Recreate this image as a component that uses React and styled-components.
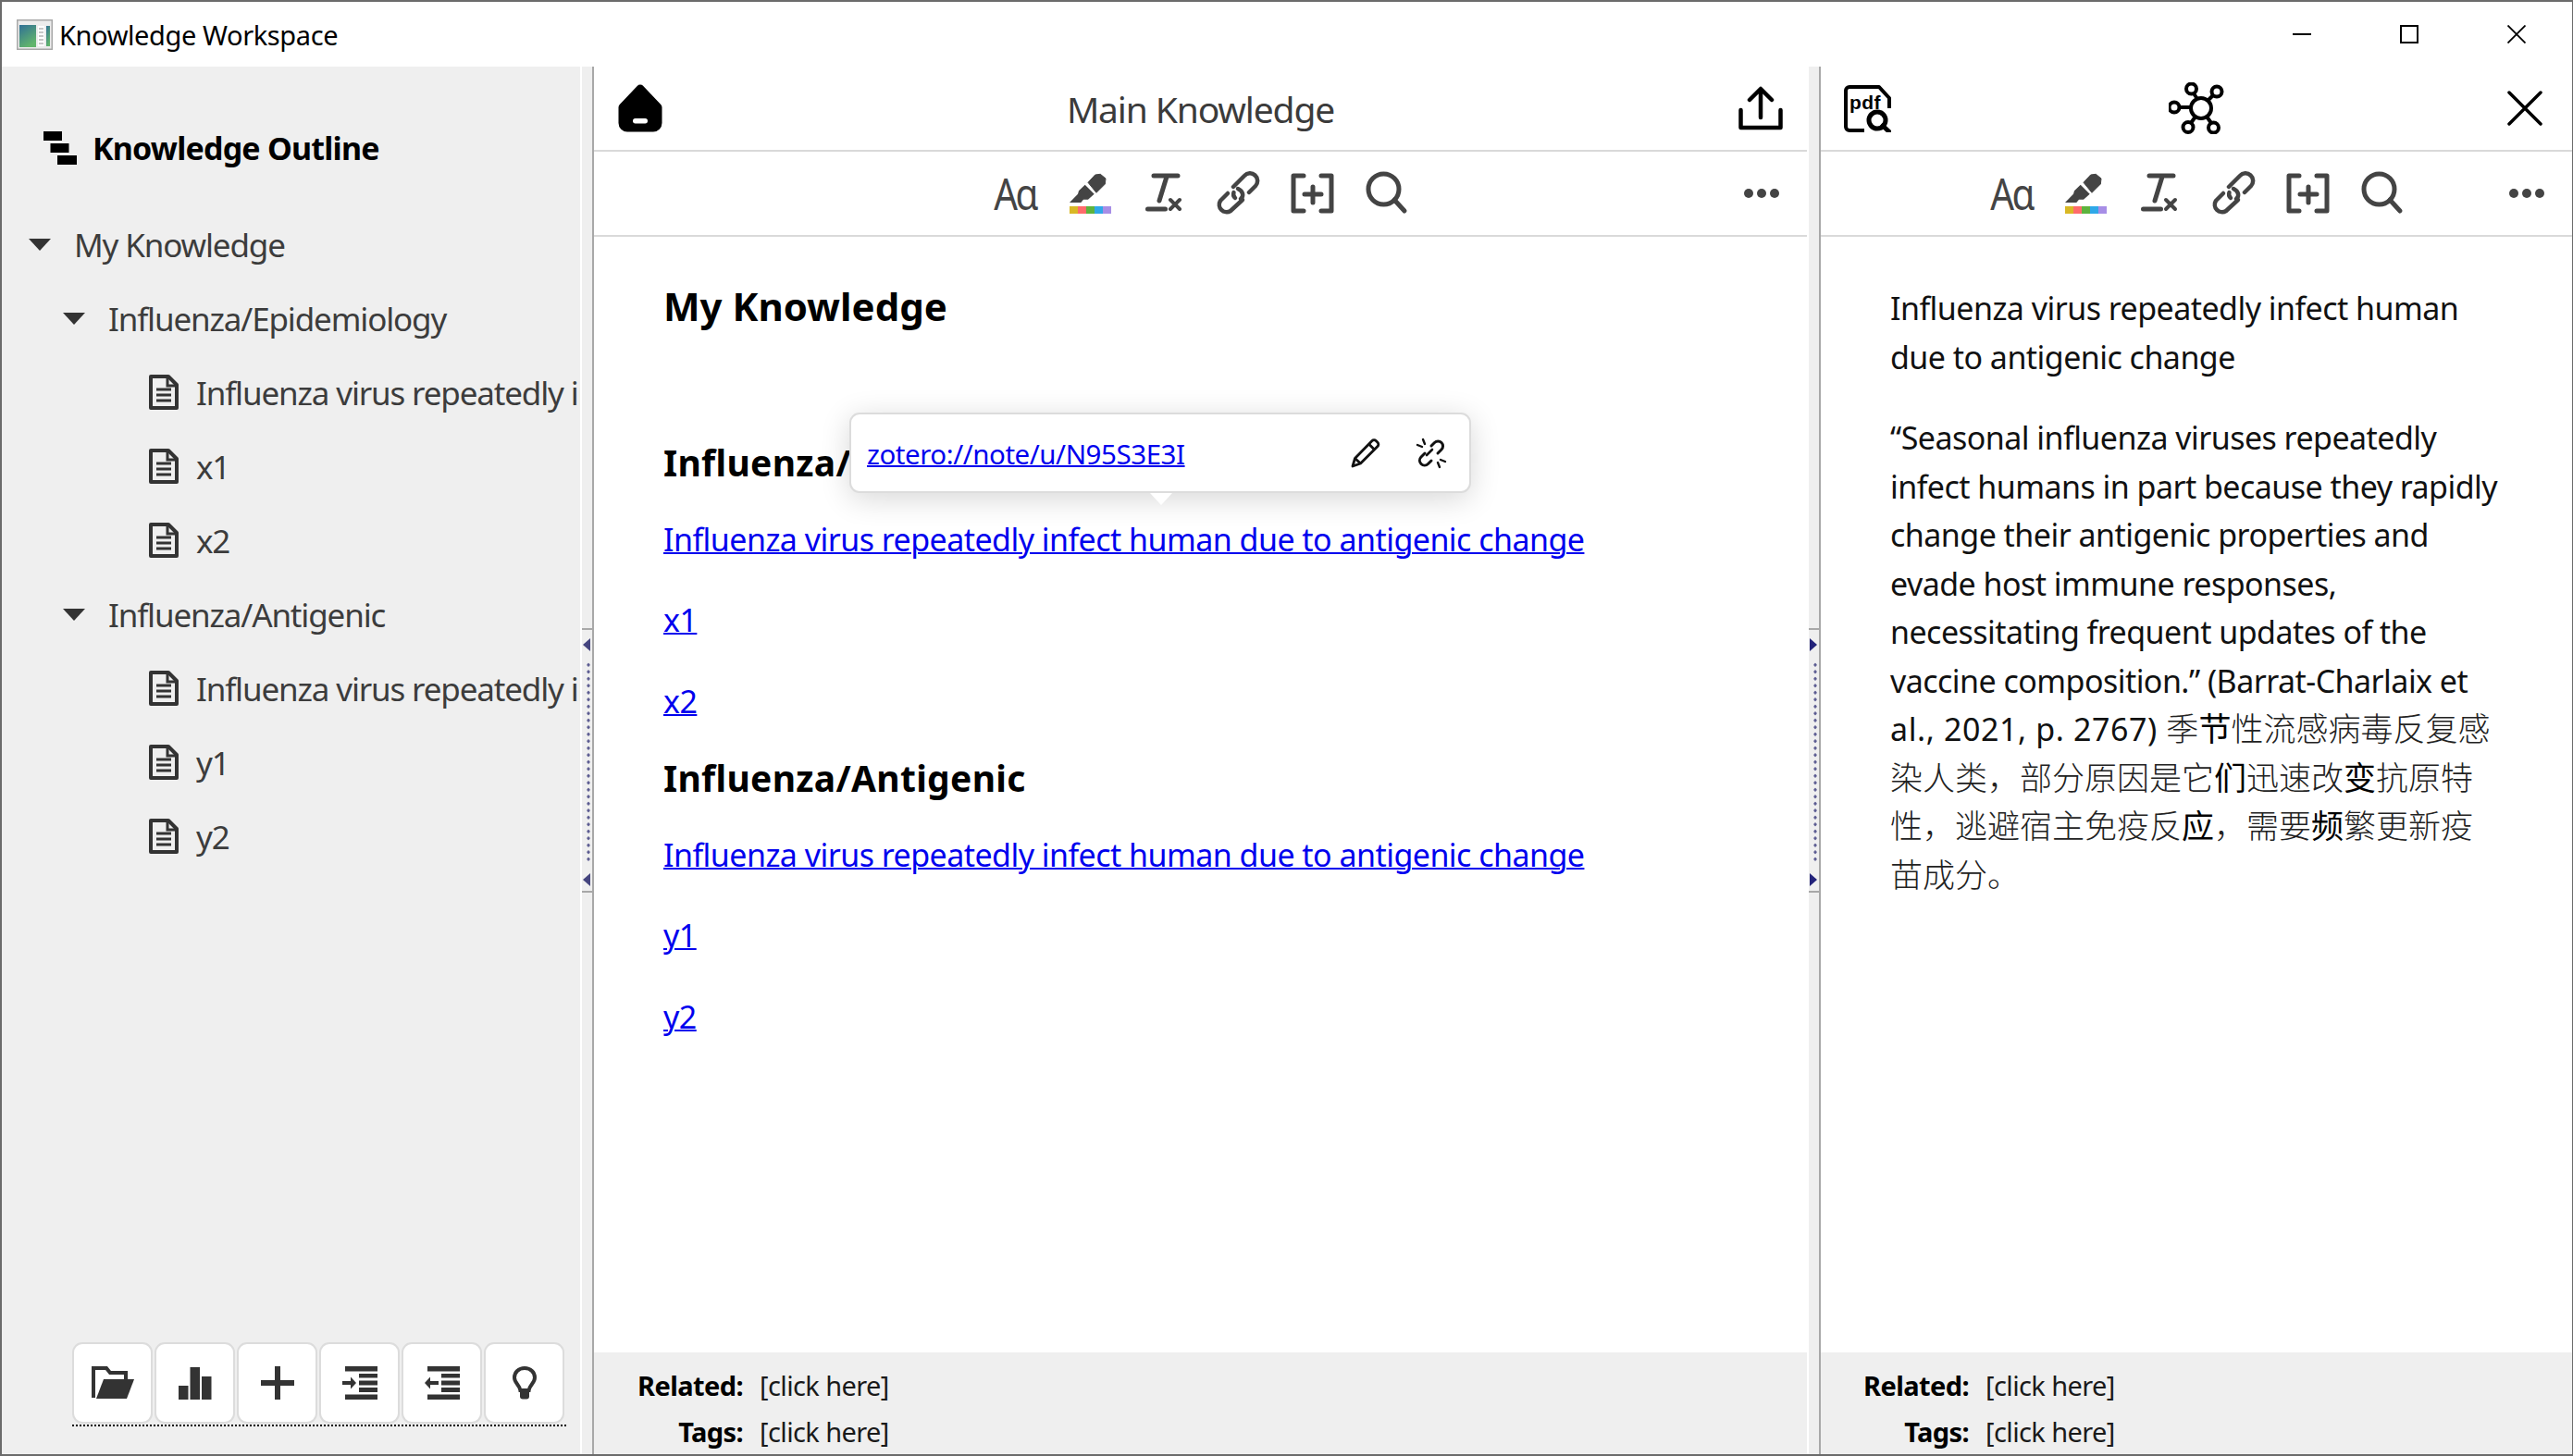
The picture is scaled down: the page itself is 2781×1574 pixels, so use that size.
import React from "react";
import styled, { createGlobalStyle } from "styled-components";

const GlobalStyle = createGlobalStyle`
  html, body {
    margin: 0;
    padding: 0;
    background: #fff;
  }
  body {
    font-family: "Noto Sans", "Noto Sans CJK SC", sans-serif;
    color: #111;
  }
  * {
    box-sizing: border-box;
  }
`;

const Window = styled.div`
  display: flex;
  flex-direction: column;
  width: 2781px;
  height: 1574px;
  overflow: hidden;
  border: 2px solid #6b6b6b;
  border-right-width: 1px;
`;

const TitleBar = styled.div`
  display: flex;
  align-items: center;
  flex: 0 0 70px;
  padding: 0 2px 0 16px;
  background: #fff;
`;

const WindowTitle = styled.div`
  margin-left: 7px;
  font-size: 29px;
  letter-spacing: -0.4px;
  color: #000;
`;

const WindowControls = styled.div`
  display: flex;
  margin-left: auto;
`;

const WindowControl = styled.div`
  display: flex;
  align-items: center;
  justify-content: center;
  width: 116px;
  height: 70px;
`;

const Main = styled.div`
  display: grid;
  grid-template-columns: 625px 15px 1311px 15px 1fr;
  flex: 1;
  min-height: 0;
`;

const Outline = styled.aside`
  display: flex;
  flex-direction: column;
  min-width: 0;
  overflow: hidden;
  background: #efefef;
`;

const OutlineHeader = styled.div`
  display: flex;
  align-items: center;
  gap: 17px;
  height: 72px;
  margin-top: 52px;
  padding-left: 45px;
`;

const OutlineTitle = styled.div`
  font-size: 34px;
  font-weight: 700;
  letter-spacing: -0.8px;
  color: #000;
`;

const Tree = styled.div`
  margin-top: 28px;
`;

const TreeRow = styled.div`
  display: flex;
  align-items: center;
  height: 80px;
  padding-left: ${({ $level }) => [29, 66, 158][$level]}px;
  white-space: nowrap;
  font-size: 35px;
  letter-spacing: -1.15px;
  color: #3c3c3c;
`;

const Caret = styled.span`
  flex: none;
  width: 0;
  height: 0;
  margin-right: 25px;
  border-left: 12.5px solid transparent;
  border-right: 12.5px solid transparent;
  border-top: 13px solid #333;
`;

const DocGlyph = styled.svg`
  flex: none;
  margin-right: 18px;
`;

const BottomBar = styled.div`
  display: flex;
  gap: 2px;
  margin: auto 0 30px 76px;
  width: 534px;
  border-bottom: 2px dotted #000;
  padding-bottom: 1px;
`;

const BarButton = styled.div`
  display: flex;
  align-items: center;
  justify-content: center;
  width: 87px;
  height: 88px;
  background: #fff;
  border: 2px solid #dcdcdc;
  border-radius: 11px;
  color: #333;
`;

const Splitter = styled.div`
  display: flex;
  align-items: center;
  background: #efefef;
  border-left: 2px solid #fff;
  border-right: 2px solid #a8a8a8;
`;

const SplitHandle = styled.div`
  display: flex;
  flex-direction: column;
  align-items: center;
  justify-content: space-between;
  width: 100%;
  height: 286px;
  padding: 9px 0 5px;
  border-top: 2px solid #a8a8a8;
  border-bottom: 2px solid #a8a8a8;
`;

const HandleArrow = styled.span`
  width: 0;
  height: 0;
  margin-right: 1px;
  border-top: 7px solid transparent;
  border-bottom: 7px solid transparent;
  ${({ $dir }) =>
    $dir === "left"
      ? "border-right: 8px solid #45457f;"
      : "border-left: 8px solid #23237a;"}
`;

const HandleDots = styled.span`
  width: 4px;
  height: 218px;
  margin-left: 3px;
  background-image: radial-gradient(circle, #5a5a90 1.4px, transparent 1.8px);
  background-size: 4px 7.5px;
`;

const Pane = styled.section`
  display: flex;
  flex-direction: column;
  min-width: 0;
  background: #fff;
`;

const PaneHeader = styled.header`
  display: grid;
  grid-template-columns: 1fr auto 1fr;
  align-items: center;
  flex: 0 0 92px;
  padding: 0 ${({ $right }) => $right}px 0 ${({ $left }) => $left}px;
  border-bottom: 2px solid #d9d9d9;
`;

const HeaderEnd = styled.div`
  display: flex;
  justify-content: ${({ $end }) => ($end ? "flex-end" : "flex-start")};
`;

const PaneTitle = styled.div`
  font-size: 39px;
  letter-spacing: -1.15px;
  color: #3b3b3b;
`;

const GraphSlot = styled.div`
  display: flex;
  margin-left: 7px;
`;

const Toolbar = styled.div`
  display: grid;
  grid-template-columns: 1fr auto 1fr;
  align-items: center;
  flex: 0 0 92px;
  padding: 0 30px;
  border-bottom: 2px solid #d9d9d9;
`;

const ToolGroup = styled.div`
  display: flex;
  grid-column: 2;
`;

const ToolButton = styled.div`
  display: flex;
  align-items: center;
  justify-content: center;
  width: 80px;
  height: 48px;
  color: #444;
`;

const AaGlyph = styled.span`
  font-family: "Noto Sans", sans-serif;
  font-size: 48px;
  line-height: 48px;
  letter-spacing: -3px;
  color: #444;
  transform: scaleX(0.84);
`;

const MoreDots = styled.div`
  display: flex;
  justify-content: flex-end;
  gap: 4px;
`;

const MoreDot = styled.span`
  width: 10px;
  height: 10px;
  border-radius: 50%;
  background: #444;
`;

const NoteBody = styled.div`
  position: relative;
  flex: 1;
  min-height: 0;
  padding: ${({ $top }) => $top}px 20px 0 ${({ $left }) => $left}px;
  font-size: 34px;
  line-height: 52.5px;
  letter-spacing: -0.54px;
  white-space: nowrap;
`;

const NoteHeading = styled.h1`
  margin: 0 0 113.5px;
  font-size: 42px;
  line-height: 60px;
  font-weight: 700;
  letter-spacing: 0;
  color: #000;
`;

const NoteSubheading = styled.h2`
  margin: 0 0 30px;
  font-size: 39px;
  line-height: 52.5px;
  font-weight: 700;
  letter-spacing: 0.3px;
  color: #000;
`;

const LinkList = styled.div`
  display: flex;
  flex-direction: column;
  gap: 35px;
  margin-bottom: 31px;
`;

const NoteLink = styled.a`
  width: fit-content;
  color: #0000ee;
  text-decoration: underline;
  text-decoration-thickness: 2px;
`;

const NoteParagraph = styled.p`
  margin: 0 0 35px;
`;

const Citation = styled.span`
  letter-spacing: 0.6px;
`;

const Cjk = styled.span`
  font-family: "Noto Sans CJK SC", sans-serif;
  font-size: 35px;
  line-height: 1;
  letter-spacing: 0;
  font-weight: ${({ $dark }) => ($dark ? 400 : 300)};
  color: ${({ $dark }) => ($dark ? "#000" : "#222")};
`;

const LinkPopup = styled.div`
  position: absolute;
  left: 276px;
  top: 190px;
  display: flex;
  align-items: center;
  width: 672px;
  height: 87px;
  padding: 0 24px 0 17px;
  background: #fff;
  border: 2px solid #dcdcdc;
  border-radius: 11px;
  box-shadow: 0 6px 32px rgba(0, 0, 0, 0.16);

  &::after {
    content: "";
    position: absolute;
    left: 323px;
    bottom: -15px;
    border-left: 12px solid transparent;
    border-right: 12px solid transparent;
    border-top: 13px solid #fff;
  }
`;

const PopupLink = styled.a`
  margin: 3px auto 0 0;
  font-size: 29.5px;
  line-height: 40px;
  letter-spacing: -0.45px;
  color: #0000ee;
  text-decoration: underline;
  text-decoration-thickness: 2px;
`;

const PopupIcons = styled.div`
  display: flex;
  align-items: center;
  gap: 38px;
  color: #111;
`;

const NoteFooter = styled.footer`
  display: grid;
  grid-template-columns: ${({ $label }) => $label}px 1fr;
  grid-auto-rows: 50px;
  column-gap: 18px;
  align-items: center;
  flex: 0 0 110px;
  padding-top: 10px;
  background: #efefef;
  font-size: 29px;
  letter-spacing: -0.6px;
`;

const FooterLabel = styled.div`
  text-align: right;
  font-weight: 700;
  color: #000;
`;

const FooterValue = styled.div`
  color: #1a1a1a;
`;

const AppIcon = () => (
  <svg width="39" height="33" viewBox="0 0 39 33">
    <defs>
      <linearGradient id="appPanel" x1="0" y1="0" x2="0.5" y2="1">
        <stop offset="0" stopColor="#2f6f96" />
        <stop offset="1" stopColor="#62b56c" />
      </linearGradient>
    </defs>
    <rect x="0.75" y="0.75" width="37.5" height="31.5" fill="#ececec" stroke="#a8a8a8" strokeWidth="1.5" />
    <rect x="3" y="6" width="18" height="24" fill="url(#appPanel)" />
    <rect x="23" y="7" width="7" height="22" fill="#fff" />
    <path d="M24 10h5M24 14h5M24 18h5M24 22h5M24 26h5" stroke="#b5b5b5" strokeWidth="1.5" />
    <rect x="32" y="7" width="4" height="22" fill="url(#appPanel)" />
  </svg>
);

const OutlineIcon = () => (
  <svg width="36" height="36" viewBox="0 0 36 36" fill="#000">
    <rect x="0" y="0" width="20" height="10" />
    <rect x="7.5" y="13" width="20" height="10" />
    <rect x="15" y="26" width="21" height="10" />
  </svg>
);

const DocIcon = () => (
  <DocGlyph width="34" height="38" viewBox="0 0 34 38" fill="none" stroke="#333" strokeWidth="4">
    <path d="M3 2h19l9 9v25H3z" strokeLinejoin="round" />
    <path d="M21 2v10h10M9 16h16M9 22h16M9 28h16" strokeWidth="3" />
  </DocGlyph>
);

const FolderIcon = () => (
  <svg width="46" height="36" viewBox="0 0 46 36" fill="#333">
    <path d="M2 34V2h14l4 5h17v9" fill="none" stroke="#333" strokeWidth="4" />
    <path d="M13 14h33l-8 21H5z" />
  </svg>
);

const ChartIcon = () => (
  <svg width="36" height="36" viewBox="0 0 36 36" fill="#333">
    <rect x="0" y="21" width="10.5" height="15" />
    <rect x="12.5" y="1" width="10.5" height="35" />
    <rect x="25" y="11" width="10.5" height="25" />
  </svg>
);

const PlusIcon = () => (
  <svg width="36" height="36" viewBox="0 0 36 36" fill="#333">
    <rect x="0" y="15" width="36" height="6" />
    <rect x="15" y="0" width="6" height="36" />
  </svg>
);

const IndentIcon = ({ out }) => (
  <svg width="38" height="36" viewBox="0 0 38 36" fill="#333">
    <rect x="3" y="0" width="35" height="5.5" />
    <rect x="18" y="8" width="20" height="4.5" />
    <rect x="18" y="15.5" width="20" height="5" />
    <rect x="18" y="23" width="20" height="5" />
    <rect x="3" y="30.5" width="35" height="5.5" />
    {out ? (
      <path d="M0 18l6-6.5v4.5h9v4H6v4.5z" />
    ) : (
      <path d="M15 18l-6-6.5v4.5H0v4h9v4.5z" />
    )}
  </svg>
);

const BulbIcon = () => (
  <svg width="26" height="36" viewBox="0 0 26 36">
    <path
      d="M13 2C6.5 2 2 6.6 2 12.2c0 6 5.7 8 6.4 13.8h9.2C18.3 20.2 24 18.2 24 12.2 24 6.6 19.5 2 13 2z"
      fill="none"
      stroke="#333"
      strokeWidth="4"
    />
    <path d="M8 28h10v4.5a3 3 0 0 1-3 3h-4a3 3 0 0 1-3-3z" fill="#333" />
  </svg>
);

const HomeIcon = () => (
  <svg width="48" height="52" viewBox="0 0 48 52">
    <path
      d="M24 5L43 25v17a5 5 0 0 1-5 5H10a5 5 0 0 1-5-5V25z"
      fill="#000"
      stroke="#000"
      strokeWidth="9"
      strokeLinejoin="round"
    />
    <rect x="16" y="37" width="16" height="5.5" rx="2.7" fill="#fff" />
  </svg>
);

const ExportIcon = () => (
  <svg width="48" height="48" viewBox="0 0 48 48" fill="none" stroke="#000" strokeWidth="4.5" strokeLinecap="round" strokeLinejoin="round">
    <path d="M2.5 26v19h43V26" />
    <path d="M24 34V4M12 15L24 3l12 12" />
  </svg>
);

const PdfIcon = () => (
  <svg width="51" height="51" viewBox="0 0 51 51">
    <path
      d="M22 49H6a4 4 0 0 1-4-4V6a4 4 0 0 1 4-4h32l11 12v11"
      fill="none"
      stroke="#000"
      strokeWidth="4"
      strokeLinejoin="round"
    />
    <text x="6" y="26" fontFamily="Liberation Sans, sans-serif" fontSize="21" fontWeight="700" letterSpacing="0.4">
      pdf
    </text>
    <circle cx="36" cy="38" r="9" fill="none" stroke="#000" strokeWidth="5" />
    <path d="M42 44l7 6.5" stroke="#000" strokeWidth="5" strokeLinecap="round" />
  </svg>
);

const GraphIcon = () => (
  <svg width="60" height="56" viewBox="0 0 60 56" fill="none" stroke="#000" strokeWidth="4">
    <circle cx="35" cy="28" r="11" />
    <circle cx="24.5" cy="7" r="5.5" />
    <circle cx="52" cy="10" r="5.5" />
    <circle cx="6" cy="27" r="5.5" />
    <circle cx="21" cy="48.5" r="5.5" />
    <circle cx="48.5" cy="49" r="5.5" />
    <path d="M27 12l4 6M48 14l-6 6M12 27h12M24 44l5-7M46 44l-5-7" />
  </svg>
);

const CloseIcon = () => (
  <svg width="38" height="38" viewBox="0 0 38 38" stroke="#000" strokeWidth="3.5" strokeLinecap="round">
    <path d="M2 2l34 34M36 2L2 36" />
  </svg>
);

const HighlightIcon = () => (
  <svg width="48" height="48" viewBox="0 0 48 48">
    <path
      d="M22 12.3L29.7 4l5.6-.7L41 8l-.7 6L31 23.3z"
      fill="#444"
      stroke="#444"
      strokeWidth="1"
      strokeLinejoin="round"
    />
    <path d="M18.7 14.7l10 10L22 30.7h-5L14.3 34H2l9-9.3 1-3.4z" fill="#444" />
    <rect x="2" y="38" width="9" height="8" fill="#d9b825" />
    <rect x="11" y="38" width="9" height="8" fill="#ff6b6b" />
    <rect x="20" y="38" width="9" height="8" fill="#5db33d" />
    <rect x="29" y="38" width="9" height="8" fill="#2fa8e8" />
    <rect x="38" y="38" width="9" height="8" fill="#a78ee6" />
  </svg>
);

const ClearFormatIcon = () => (
  <svg width="48" height="48" viewBox="0 0 48 48" fill="none" stroke="#444" strokeWidth="5" strokeLinecap="round">
    <path d="M13 5h26M27 6l-8 26M6.5 41h19" />
    <path d="M31 31l10 10M41 31L31 41" strokeWidth="4" />
  </svg>
);

const LinkIcon = () => (
  <svg width="48" height="48" viewBox="0 0 48 48" fill="none" stroke="#444" strokeWidth="4.5" strokeLinecap="round" strokeLinejoin="round">
    <path d="M19 17L31 5a8 8 0 0 1 12 11l-7 7" />
    <path d="M29 31L16 43A8 8 0 0 1 5 32l8-8" />
    <path d="M24 19c6 3 6.5 8 3 11M21 29c-2-2-2.500-3.500-1.500-6" />
  </svg>
);

const BracketPlusIcon = () => (
  <svg width="48" height="48" viewBox="0 0 48 48" fill="none" stroke="#444" strokeWidth="5" strokeLinecap="round" strokeLinejoin="round">
    <path d="M15 5H4v38h11M34 5h11v38H34" />
    <path d="M16 25h18M25 17v17" />
  </svg>
);

const SearchIcon = () => (
  <svg width="48" height="48" viewBox="0 0 48 48" fill="none" stroke="#444" strokeWidth="5" strokeLinecap="round">
    <circle cx="21.5" cy="19.5" r="16.5" />
    <path d="M33 31l11 12" />
  </svg>
);

const PencilIcon = () => (
  <svg width="32" height="34" viewBox="0 0 32 34" fill="none" stroke="#111" strokeWidth="2.8" strokeLinejoin="round">
    <path d="M23 3.5a3 3 0 0 1 4.2 0l1.8 1.8a3 3 0 0 1 0 4.2L10.5 28 2 31l2.5-8.5z" />
    <path d="M4.5 22.5l6 5.5M19.5 7l6 6" />
  </svg>
);

const UnlinkIcon = () => (
  <svg width="34" height="34" viewBox="0 0 34 34" fill="none" stroke="#111" strokeWidth="3" strokeLinecap="round">
    <path d="M17 9l3.5-3.5a5.2 5.2 0 0 1 7.5 7.5L24 17" />
    <path d="M17 25l-3.5 3.5A5.2 5.2 0 0 1 6 21l4-4" />
    <path d="M12 19l6-6" strokeWidth="2.6" />
    <path d="M8 2l2 5M2 8l5 2M26 32l-2-5M32 26l-5-2" strokeWidth="2.4" />
  </svg>
);

const MinimizeIcon = () => (
  <svg width="20" height="20" viewBox="0 0 20 20" stroke="#000" strokeWidth="2">
    <path d="M0 10h20" />
  </svg>
);

const MaximizeIcon = () => (
  <svg width="20" height="20" viewBox="0 0 20 20" fill="none" stroke="#000" strokeWidth="2">
    <rect x="1" y="1" width="18" height="18" />
  </svg>
);

const WindowCloseIcon = () => (
  <svg width="20" height="20" viewBox="0 0 20 20" stroke="#000" strokeWidth="1.8">
    <path d="M0.5 0.5l19 19M19.5 0.5l-19 19" />
  </svg>
);

const Handle = ({ dir }) => (
  <Splitter>
    <SplitHandle>
      <HandleArrow $dir={dir} />
      <HandleDots />
      <HandleArrow $dir={dir} />
    </SplitHandle>
  </Splitter>
);

const EditorTools = () => (
  <Toolbar>
    <ToolGroup>
      <ToolButton>
        <AaGlyph>Aɑ</AaGlyph>
      </ToolButton>
      <ToolButton>
        <HighlightIcon />
      </ToolButton>
      <ToolButton>
        <ClearFormatIcon />
      </ToolButton>
      <ToolButton>
        <LinkIcon />
      </ToolButton>
      <ToolButton>
        <BracketPlusIcon />
      </ToolButton>
      <ToolButton>
        <SearchIcon />
      </ToolButton>
    </ToolGroup>
    <MoreDots>
      <MoreDot />
      <MoreDot />
      <MoreDot />
    </MoreDots>
  </Toolbar>
);

const Footer = ({ label }) => (
  <NoteFooter $label={label}>
    <FooterLabel>Related:</FooterLabel>
    <FooterValue>[click here]</FooterValue>
    <FooterLabel>Tags:</FooterLabel>
    <FooterValue>[click here]</FooterValue>
  </NoteFooter>
);

const LONG_TITLE = "Influenza virus repeatedly infect human due to antigenic change";

const TREE = [
  { level: 0, caret: true, text: "My Knowledge" },
  { level: 1, caret: true, text: "Influenza/Epidemiology" },
  { level: 2, text: LONG_TITLE },
  { level: 2, text: "x1" },
  { level: 2, text: "x2" },
  { level: 1, caret: true, text: "Influenza/Antigenic" },
  { level: 2, text: LONG_TITLE },
  { level: 2, text: "y1" },
  { level: 2, text: "y2" },
];

export default function App() {
  return (
    <>
      <GlobalStyle />
      <Window>
        <TitleBar>
          <AppIcon />
          <WindowTitle>Knowledge Workspace</WindowTitle>
          <WindowControls>
            <WindowControl>
              <MinimizeIcon />
            </WindowControl>
            <WindowControl>
              <MaximizeIcon />
            </WindowControl>
            <WindowControl>
              <WindowCloseIcon />
            </WindowControl>
          </WindowControls>
        </TitleBar>
        <Main>
          <Outline>
            <OutlineHeader>
              <OutlineIcon />
              <OutlineTitle>Knowledge Outline</OutlineTitle>
            </OutlineHeader>
            <Tree>
              {TREE.map((row, i) => (
                <TreeRow key={i} $level={row.level}>
                  {row.caret ? <Caret /> : <DocIcon />}
                  {row.text}
                </TreeRow>
              ))}
            </Tree>
            <BottomBar>
              <BarButton>
                <FolderIcon />
              </BarButton>
              <BarButton>
                <ChartIcon />
              </BarButton>
              <BarButton>
                <PlusIcon />
              </BarButton>
              <BarButton>
                <IndentIcon />
              </BarButton>
              <BarButton>
                <IndentIcon out />
              </BarButton>
              <BarButton>
                <BulbIcon />
              </BarButton>
            </BottomBar>
          </Outline>
          <Handle dir="left" />
          <Pane>
            <PaneHeader $left={26} $right={26}>
              <HeaderEnd>
                <HomeIcon />
              </HeaderEnd>
              <PaneTitle>Main Knowledge</PaneTitle>
              <HeaderEnd $end>
                <ExportIcon />
              </HeaderEnd>
            </PaneHeader>
            <EditorTools />
            <NoteBody $top={44.5} $left={75}>
              <NoteHeading>My Knowledge</NoteHeading>
              <NoteSubheading>Influenza/Epidemiology</NoteSubheading>
              <LinkList>
                <NoteLink>{LONG_TITLE}</NoteLink>
                <NoteLink>x1</NoteLink>
                <NoteLink>x2</NoteLink>
              </LinkList>
              <NoteSubheading>Influenza/Antigenic</NoteSubheading>
              <LinkList>
                <NoteLink>{LONG_TITLE}</NoteLink>
                <NoteLink>y1</NoteLink>
                <NoteLink>y2</NoteLink>
              </LinkList>
              <LinkPopup>
                <PopupLink>zotero://note/u/N95S3E3I</PopupLink>
                <PopupIcons>
                  <PencilIcon />
                  <UnlinkIcon />
                </PopupIcons>
              </LinkPopup>
            </NoteBody>
            <Footer label={161} />
          </Pane>
          <Handle dir="right" />
          <Pane>
            <PaneHeader $left={25} $right={32}>
              <HeaderEnd>
                <PdfIcon />
              </HeaderEnd>
              <GraphSlot>
                <GraphIcon />
              </GraphSlot>
              <HeaderEnd $end>
                <CloseIcon />
              </HeaderEnd>
            </PaneHeader>
            <EditorTools />
            <NoteBody $top={51} $left={75}>
              <NoteParagraph>
                Influenza virus repeatedly infect human
                <br />
                due to antigenic change
              </NoteParagraph>
              <NoteParagraph>
                “Seasonal influenza viruses repeatedly
                <br />
                infect humans in part because they rapidly
                <br />
                change their antigenic properties and
                <br />
                evade host immune responses,
                <br />
                necessitating frequent updates of the
                <br />
                vaccine composition.” (Barrat-Charlaix et
                <br />
                <Citation>al., 2021, p. 2767) </Citation>
                <Cjk>季</Cjk>
                <Cjk $dark>节</Cjk>
                <Cjk>性流感病毒反复感</Cjk>
                <br />
                <Cjk>染人类，部分原因是它</Cjk>
                <Cjk $dark>们</Cjk>
                <Cjk>迅速改</Cjk>
                <Cjk $dark>变</Cjk>
                <Cjk>抗原特</Cjk>
                <br />
                <Cjk>性，逃避宿主免疫反</Cjk>
                <Cjk $dark>应</Cjk>
                <Cjk>，需要</Cjk>
                <Cjk $dark>频</Cjk>
                <Cjk>繁更新疫</Cjk>
                <br />
                <Cjk>苗成分。</Cjk>
              </NoteParagraph>
            </NoteBody>
            <Footer label={160} />
          </Pane>
        </Main>
      </Window>
    </>
  );
}
